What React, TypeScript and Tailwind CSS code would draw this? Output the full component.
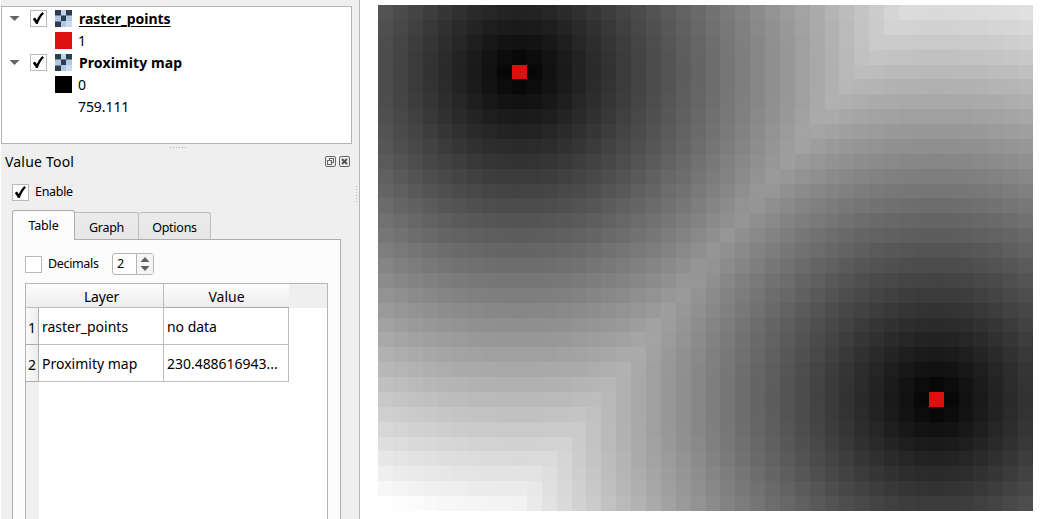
import React from "react";

const COLS = 44;
const ROWS = 34;
const MAP_W = 655;
const MAP_H = 506;
const POINTS = [
  { c: 9, r: 4 },
  { c: 37, r: 26 },
];
const MAX = 30.364;

const edgeX = (i: number) => Math.round((i * MAP_W) / COLS);
const edgeY = (i: number) => Math.round((i * MAP_H) / ROWS);

function ProximityMap() {
  const cells: React.ReactNode[] = [];
  for (let r = 0; r < ROWS; r++) {
    for (let c = 0; c < COLS; c++) {
      const d = Math.min(...POINTS.map((p) => Math.hypot(p.c - c, p.r - r)));
      const v = Math.min(255, Math.round((255 * d) / MAX));
      cells.push(
        <rect
          key={`${r}-${c}`}
          x={edgeX(c)}
          y={edgeY(r)}
          width={edgeX(c + 1) - edgeX(c)}
          height={edgeY(r + 1) - edgeY(r)}
          fill={d === 0 ? "#dd0f0f" : `rgb(${v},${v},${v})`}
        />
      );
    }
  }
  return (
    <svg width={MAP_W} height={MAP_H} shapeRendering="crispEdges" className="block shrink-0">
      {cells}
    </svg>
  );
}

function Check({ on }: { on: boolean }) {
  return (
    <span className="flex h-[17px] w-[17px] shrink-0 items-center justify-center border border-[#b9b9b9] bg-white">
      {on && (
        <svg width="15" height="15" viewBox="0 0 15 15" fill="none" stroke="#000">
          <path d="M2.9 7.2L6 11.8" strokeWidth="2.8" />
          <path d="M5.6 12.8C7.3 8 9.2 4.4 12.2 1.8" strokeWidth="2.3" />
        </svg>
      )}
    </span>
  );
}

function RasterIcon() {
  return (
    <svg width="17" height="17" viewBox="0 0 17 17" shapeRendering="crispEdges" className="shrink-0">
      <rect width="17" height="17" fill="#b0c8e4" />
      <rect x="6" y="0" width="5" height="5" fill="#c0d5ec" />
      <rect x="11" y="11" width="6" height="6" fill="#cbdcf0" />
      <g fill="#2e3c50">
        <rect x="0" y="0" width="6" height="5" />
        <rect x="11" y="0" width="6" height="5" />
        <rect x="6" y="6" width="5" height="5" />
        <rect x="0" y="12" width="6" height="5" />
      </g>
      <g fill="#71839d">
        <rect x="0" y="5" width="6" height="1" />
        <rect x="11" y="5" width="6" height="1" />
        <rect x="6" y="5" width="5" height="1" />
        <rect x="0" y="11" width="6" height="1" />
      </g>
    </svg>
  );
}

function LayerRow({ name, active }: { name: string; active?: boolean }) {
  return (
    <div className="flex h-[22px] items-center pl-[7px]">
      <svg width="12" height="7" className="mr-[9px] shrink-0">
        <path d="M0.5 1H10.5L5.5 6Z" fill="#656565" />
      </svg>
      <Check on />
      <span className="ml-2 flex">
        <RasterIcon />
      </span>
      <span className={active ? "ml-[7px] pt-px text-[14px] font-bold tracking-[-0.02px] underline decoration-1 underline-offset-2" : "ml-[7px] pt-px text-[14px] font-bold tracking-[0.1px]"}>
        {name}
      </span>
    </div>
  );
}

function LegendRow({ swatch, label }: { swatch: string; label: string }) {
  return (
    <div className="flex h-[22px] items-center pl-[53px]">
      <span className={`h-[17px] w-[17px] ${swatch}`} />
      <span className="ml-[6px] pt-px text-[14px] tracking-[-0.08px]">{label}</span>
    </div>
  );
}

function DockButtons() {
  return (
    <svg width="27" height="12" fill="none" stroke="#666">
      <rect x="0.5" y="0.5" width="10" height="10" rx="1.5" />
      <rect x="4.5" y="2.5" width="4" height="4" />
      <rect x="2.5" y="4.5" width="4" height="4" fill="#efefef" />
      <rect x="14.5" y="0.5" width="10" height="10" rx="1.5" />
      <path d="M17 3L22 8M22 3L17 8" strokeWidth="2" stroke="#555" />
    </svg>
  );
}

export default function App() {
  return (
    <div className="flex h-[519px] w-[1040px] overflow-hidden bg-white pl-px font-['Noto_Sans','Open_Sans',sans-serif] text-black">
      <aside className="flex h-full w-[359px] shrink-0 border-r border-[#b5b5b5] bg-[#efefef]">
        <div className="flex w-[351px] flex-col">
          <div className="mt-[6px] h-[138px] w-[351px] shrink-0 border border-[#b5b5b5] bg-white">
            <LayerRow name="raster_points" active />
            <LegendRow swatch="bg-[#dd0f0f]" label="1" />
            <LayerRow name="Proximity map" />
            <LegendRow swatch="bg-black" label="0" />
            <LegendRow swatch="bg-white" label="759.111" />
          </div>
          <div className="flex h-[7px] shrink-0 items-center pl-[169px]">
            <span className="h-px w-[17px] bg-[repeating-linear-gradient(90deg,#b0b0b0_0px,#b0b0b0_1px,transparent_1px,transparent_3px)]" />
          </div>
          <div className="flex h-[21px] shrink-0 items-center justify-between pl-1">
            <span className="text-[14px] tracking-[0.2px]">Value Tool</span>
            <DockButtons />
          </div>
          <div className="mt-[9px] flex h-[22px] shrink-0 items-center gap-[6px] pl-[11px] text-[12.5px] tracking-[-0.3px]">
            <Check on />
            <span className="pt-px">Enable</span>
          </div>
          <div className="mt-[7px] flex h-[29px] shrink-0 items-end pl-[11px] text-[12.5px] tracking-[-0.15px]">
            <div className="z-10 -mb-px flex h-[30px] w-[63px] items-center justify-center rounded-t-[3px] border border-b-0 border-[#adadad] bg-[#fcfcfc] pt-[2px]">Table</div>
            <div className="flex h-[27px] w-[64px] items-center justify-center rounded-tr-[3px] border-t border-r border-[#bcbcbc] bg-gradient-to-b from-[#ebebeb] to-[#e7e7e7] pt-1 tracking-[-0.3px]">Graph</div>
            <div className="flex h-[27px] w-[72px] items-center justify-center rounded-t-[3px] border-t border-r border-[#bcbcbc] bg-gradient-to-b from-[#ebebeb] to-[#e7e7e7] pt-1 tracking-[-0.25px]">Options</div>
          </div>
          <div className="ml-[11px] flex w-[329px] grow flex-col border border-b-0 border-[#adadad] bg-[#fcfcfc] pl-3">
            <div className="mt-[13px] flex h-[22px] shrink-0 items-center">
              <Check on={false} />
              <span className="ml-[6px] w-[64px] pt-px text-[12.5px] tracking-[-0.35px]">Decimals</span>
              <div className="flex h-[22px] w-[42px] items-center rounded-[3px] border border-[#b5b5b5] bg-white text-[12.5px]">
                <span className="w-[23px] pl-1 pt-px">2</span>
                <span className="flex h-full w-[17px] items-center justify-center border-l border-[#b5b5b5] bg-[#f5f5f5]">
                  <svg width="10" height="14" fill="#606060" className="-ml-px">
                    <path d="M0.5 5L5 0L9.5 5ZM0.5 9H9.5L5 14Z" />
                  </svg>
                </span>
              </div>
            </div>
            <div className="mt-[8px] flex w-[303px] grow flex-col border border-b-0 border-[#b5b5b5] bg-white text-[14px]">
              <div className="flex h-[24px] shrink-0 bg-[#efefef] leading-none">
                <div className="flex w-[138px] items-center justify-center border-r border-b border-[#bcbcbc] bg-gradient-to-b from-[#fdfdfd] to-[#ededed] pl-[14px] pt-[3px] tracking-[-0.2px]">Layer</div>
                <div className="flex w-[125px] items-center justify-center border-b border-[#adadad] bg-gradient-to-b from-[#fdfdfd] to-[#ededed] pt-[3px]">Value</div>
              </div>
              <Row n="1" layer="raster_points" value="no data" />
              <Row n="2" layer="Proximity map" value="230.488616943..." />
              <div className="w-[13px] grow bg-[#efefef]" />
            </div>
          </div>
        </div>
        <div className="mt-[186px] ml-[4px] h-[17px] w-px bg-[repeating-linear-gradient(180deg,#b0b0b0_0px,#b0b0b0_1px,transparent_1px,transparent_3px)]" />
      </aside>
      <main className="pt-[5px] pl-[18px]">
        <ProximityMap />
      </main>
    </div>
  );
}

function Row({ n, layer, value }: { n: string; layer: string; value: string }) {
  return (
    <div className="flex h-[37px] shrink-0 whitespace-nowrap">
      <div className="flex w-[13px] items-center justify-center border-r border-b border-[#adadad] bg-gradient-to-r from-[#fafafa] to-[#ededed] pt-[2px]">{n}</div>
      <div className="flex w-[125px] items-center border-r border-b border-[#bcbcbc] pl-[3px] tracking-[0px]">{layer}</div>
      <div className="flex w-[125px] items-center border-r border-b border-[#bcbcbc] pl-[3px] tracking-[-0.03px]">{value}</div>
    </div>
  );
}
